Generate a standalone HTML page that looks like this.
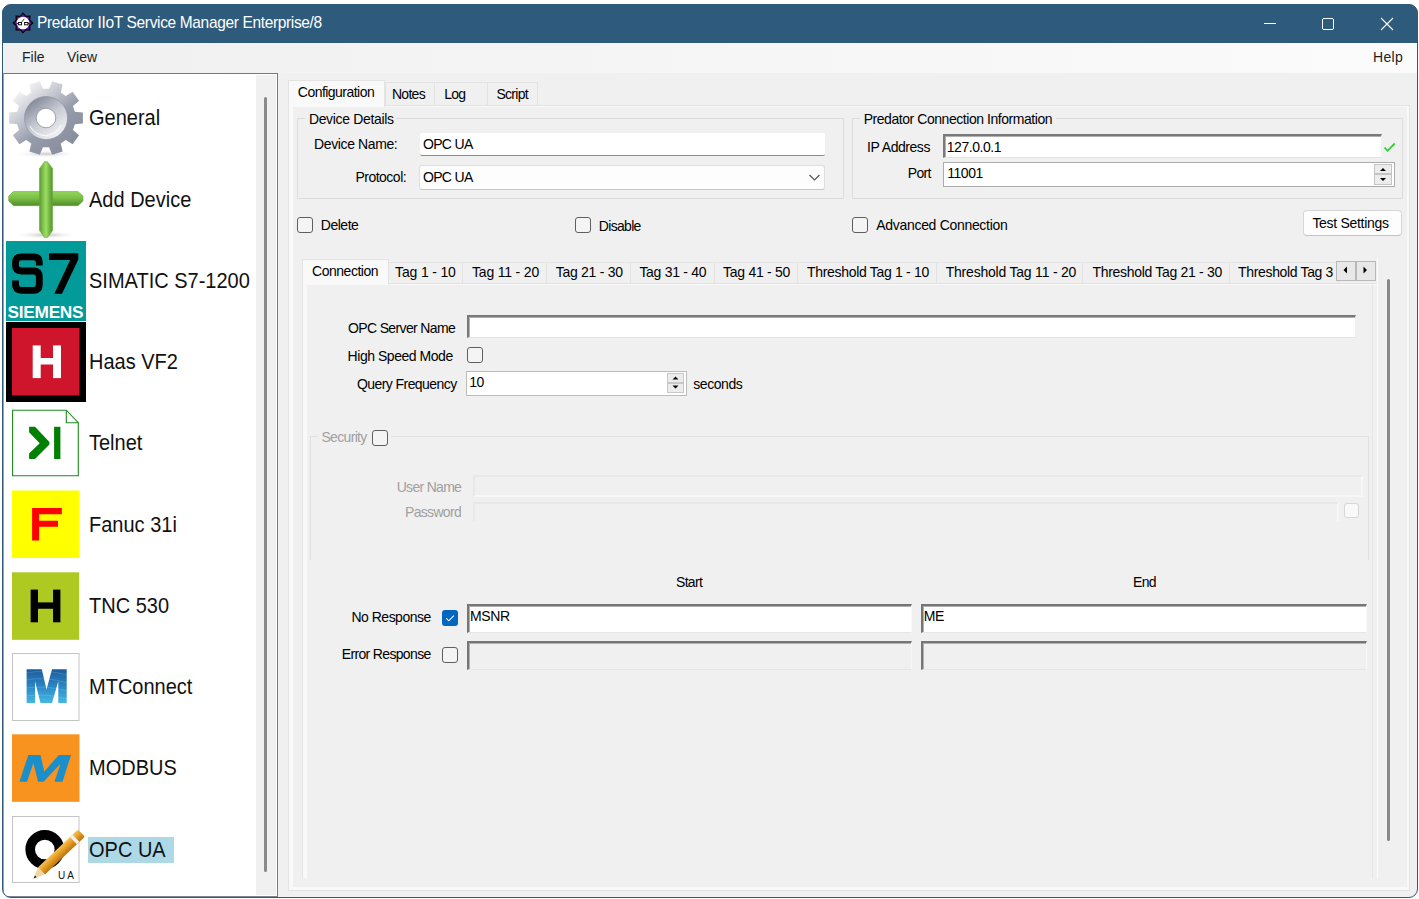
<!DOCTYPE html>
<html><head><meta charset="utf-8">
<style>
*{box-sizing:border-box;margin:0;padding:0}
html,body{width:1419px;height:899px;overflow:hidden;background:#fff;font-family:"Liberation Sans",sans-serif;color:#000;position:relative}
.a{position:absolute}
#win{position:absolute;left:2px;top:4px;width:1416px;height:894px;border-radius:9px;background:#f0f0f0}
#frame{position:absolute;left:2px;top:4px;width:1416px;height:894px;border-radius:9px;border:1px solid #2e5a7c;box-shadow:0 0 0 40px #fff;z-index:100;pointer-events:none}
#title{position:absolute;left:2px;top:4px;width:1416px;height:39px;background:#2e5a7c;border-radius:9px 9px 0 0}
#title .t{position:absolute;left:35px;top:11px;color:#fff;font-size:15.5px;line-height:16px;white-space:nowrap}
#menu{position:absolute;left:3px;top:43px;width:1414px;height:30px;background:linear-gradient(to right,#f0f0f0,#fbfbfb)}
#menu span{position:absolute;top:6px;font-size:14px;color:#1e1e1e}
#left{position:absolute;left:3px;top:73px;width:275px;height:824px;background:#fff;border-top:1px solid #6d7a87;border-right:1.5px solid #6d7a87;border-left:1px solid #9aa3ad;border-bottom:1px solid #7d8790}
.it{position:absolute;left:89px;font-size:20px;line-height:20px;color:#111;white-space:nowrap;transform:scaleY(1.08);transform-origin:0 16.93px}
.t{position:absolute;font-size:14px;line-height:14px;letter-spacing:-0.35px;white-space:nowrap;color:#000;transform:scaleY(1.08);transform-origin:0 11.85px}
.cb{position:absolute;width:16px;height:16px;border:1.2px solid #5f5f5f;border-radius:3px;background:#f4f4f4}
.cbc{position:absolute;width:16px;height:16px;border-radius:3px;background:#0067c0}
.itab{position:absolute;top:262px;height:22px;background:#f0f0f0;border:1px solid #e3e3e3;border-bottom:none}
.f3d{position:absolute;border-style:solid;border-width:2px 1px 1px 2px;border-color:#767676 #f7f7f7 #e6e6e6 #767676;box-shadow:inset 1px 1px 0 #b0b0b0}
</style></head><body>
<div id="win"></div>
<div id="title">
  <svg class="a" style="left:9.9px;top:7.9px;overflow:visible" width="22" height="22" viewBox="0 0 22 22">
    <polygon points="11.00,1.20 13.79,4.26 17.93,4.07 17.74,8.21 20.80,11.00 17.74,13.79 17.93,17.93 13.79,17.74 11.00,20.80 8.21,17.74 4.07,17.93 4.26,13.79 1.20,11.00 4.26,8.21 4.07,4.07 8.21,4.26" fill="#5b1590" stroke="#000" stroke-width="1.1" stroke-linejoin="miter"/>
    <circle cx="11" cy="11" r="6.3" fill="#fff"/>
    <rect x="6.4" y="10.5" width="3.1" height="2.3" fill="none" stroke="#111" stroke-width="1"/>
    <rect x="12.6" y="10.5" width="3.4" height="2.3" fill="none" stroke="#111" stroke-width="1"/>
    <line x1="4.6" y1="11.6" x2="6.4" y2="11.6" stroke="#111" stroke-width="0.9"/>
    <line x1="16" y1="11.6" x2="17.6" y2="11.6" stroke="#111" stroke-width="0.9"/>
    <line x1="9.8" y1="10" x2="12.3" y2="6.8" stroke="#222" stroke-width="0.9"/>
  </svg>
  <div class="t">Predator IIoT Service Manager Enterprise/8</div>
  <div class="a" style="left:1262px;top:19px;width:12px;height:1px;background:#fff"></div>
  <div class="a" style="left:1320px;top:14px;width:12px;height:12px;border:1.2px solid #fff;border-radius:2px"></div>
  <svg class="a" style="left:1378px;top:13px" width="14" height="14" viewBox="0 0 14 14"><path d="M1 1L13 13M13 1L1 13" stroke="#fff" stroke-width="1.1"/></svg>
</div>
<div id="menu">
  <span style="left:19px">File</span>
  <span style="left:64px">View</span>
  <span style="left:1370px;letter-spacing:0.3px">Help</span>
</div>
<div id="left"></div>
<!-- scrollbar of list -->
<div class="a" style="left:256px;top:75px;width:20px;height:820px;background:#f0f0f0"></div>
<div class="a" style="left:264px;top:97px;width:3px;height:775px;background:#8a8a8a;border-radius:1.5px"></div>

<!-- LEFT ITEMS -->
<!-- 0 gear -->
<svg class="a" style="left:6px;top:78px" width="80" height="80" viewBox="0 0 80 80">
  <defs>
    <linearGradient id="gg" x1="0.15" y1="0.1" x2="0.8" y2="0.9"><stop offset="0" stop-color="#f6f6f8"/><stop offset="0.33" stop-color="#c4c7d0"/><stop offset="0.6" stop-color="#979cab"/><stop offset="1" stop-color="#888e9e"/></linearGradient>
    <linearGradient id="gr" x1="0.2" y1="0.1" x2="0.8" y2="0.9"><stop offset="0" stop-color="#868c9c"/><stop offset="0.5" stop-color="#c8cbd3"/><stop offset="1" stop-color="#f2f2f5"/></linearGradient>
    <radialGradient id="gs"><stop offset="0" stop-color="#c8c8c8"/><stop offset="1" stop-color="#fff" stop-opacity="0"/></radialGradient>
  </defs>
  <ellipse cx="40" cy="76" rx="32" ry="4" fill="url(#gs)"/>
  <path id="gearp" fill="url(#gg)" d="M68.86 46.13 L76.89 45.51 L76.89 34.49 L68.86 33.87 L66.95 28.00 L73.09 22.78 L66.60 13.86 L59.74 18.08 L54.75 14.45 L56.64 6.62 L46.16 3.21 L43.08 10.66 L36.92 10.66 L33.84 3.21 L23.36 6.62 L25.25 14.45 L20.26 18.08 L13.40 13.86 L6.91 22.78 L13.05 28.00 L11.14 33.87 L3.11 34.49 L3.11 45.51 L11.14 46.13 L13.05 52.00 L6.91 57.22 L13.40 66.14 L20.26 61.92 L25.25 65.55 L23.36 73.38 L33.84 76.79 L36.92 69.34 L43.08 69.34 L46.16 76.79 L56.64 73.38 L54.75 65.55 L59.74 61.92 L66.60 66.14 L73.09 57.22 L66.95 52.00Z"/>
  <circle cx="40" cy="40" r="21.5" fill="url(#gr)" stroke="#8a90a0" stroke-width="0.6"/>
  <circle cx="40" cy="40" r="9.8" fill="#fff" stroke="#8a90a0" stroke-width="0.8"/>
  <path d="M24 48A17 17 0 0 0 55 47" fill="none" stroke="#fff" stroke-opacity="0.7" stroke-width="1.2"/>
</svg>
<div class="it" style="top:108.47px">General</div>
<!-- 1 plus -->
<svg class="a" style="left:6px;top:159px" width="80" height="80" viewBox="0 0 80 80">
  <defs>
    <linearGradient id="pv" x1="0" y1="0" x2="1" y2="0"><stop offset="0" stop-color="#5e9a34"/><stop offset="0.25" stop-color="#7cc04a"/><stop offset="0.5" stop-color="#9ee064"/><stop offset="0.75" stop-color="#74b444"/><stop offset="1" stop-color="#5a9430"/></linearGradient>
    <linearGradient id="ph" x1="0" y1="0" x2="0" y2="1"><stop offset="0" stop-color="#92d85a"/><stop offset="0.5" stop-color="#78bc46"/><stop offset="1" stop-color="#508a2a"/></linearGradient>
    <radialGradient id="ps"><stop offset="0" stop-color="#c0c0c0"/><stop offset="1" stop-color="#fff" stop-opacity="0"/></radialGradient>
  </defs>
  <ellipse cx="40" cy="76" rx="32" ry="4" fill="url(#ps)"/>
  <path d="M2.7 37L7.5 32.6H72L77 37V42L72 46.7H7.5L2.7 42Z" fill="url(#ph)" stroke="#6aa83c" stroke-width="0.6" stroke-linejoin="round"/>
  <path d="M33.5 9.5L38.5 2.7H41.5L46.6 9.5V71.5L41.5 78.4H38.5L33.5 71.5Z" fill="url(#pv)" stroke="#6aa83c" stroke-width="0.6" stroke-linejoin="round"/>
</svg>
<div class="it" style="top:189.72px">Add Device</div>
<!-- 2 S7 -->
<svg class="a" style="left:6px;top:240.5px" width="80" height="80" viewBox="0 0 80 80">
  <rect width="80" height="80" fill="#039a9a"/>
  <path d="M33.3 24.5V21.5Q33.3 15.8 27.5 15.8H15.3Q9.5 15.8 9.5 21.5V24.3Q9.5 30 15.3 30H27.5Q33.3 30 33.3 35.8V43.5Q33.3 49.4 27.5 49.4H15.3Q9.5 49.4 9.5 43.5V39.5" fill="none" stroke="#000" stroke-width="6.8"/>
  <path d="M43 12.3H72.3V18.6L56 52.8H48.3L64.2 19H43Z" fill="#000"/>
  <text x="1.6" y="77.3" font-family="Liberation Sans" font-weight="bold" font-size="17.3" letter-spacing="-0.3" fill="#fff">SIEMENS</text>
</svg>
<div class="it" style="top:270.97px">SIMATIC S7-1200</div>
<!-- 3 Haas -->
<svg class="a" style="left:6px;top:322px" width="80" height="80" viewBox="0 0 80 80">
  <rect x="0" y="0" width="80" height="80" fill="#000"/>
  <rect x="6" y="6" width="67.5" height="67.5" fill="#cf152b"/>
  <rect x="26.7" y="23.4" width="8" height="32.7" fill="#fff"/>
  <rect x="47" y="23.4" width="8" height="32.7" fill="#fff"/>
  <rect x="34" y="36" width="14" height="6.5" fill="#fff"/>
</svg>
<div class="it" style="top:352.22px">Haas VF2</div>
<!-- 4 Telnet -->
<svg class="a" style="left:6px;top:403px" width="80" height="80" viewBox="0 0 80 80">
  <path d="M6.6 7.2H60.3L72.3 19.7V72.8H6.6Z" fill="#fff" stroke="#1d8b1d" stroke-width="1.1"/>
  <path d="M60.3 7.2V19.7H72.3" fill="none" stroke="#1d8b1d" stroke-width="1.1"/>
  <path d="M23.1 23.8H29L43.4 39V41.6L29 56H23.1V50.5L33.7 40.3L23.1 29.3Z" fill="#008000"/>
  <rect x="48.1" y="23.8" width="6.3" height="32.2" fill="#008000"/>
</svg>
<div class="it" style="top:433.47px">Telnet</div>
<!-- 5 Fanuc -->
<svg class="a" style="left:6px;top:484px" width="80" height="80" viewBox="0 0 80 80">
  <rect x="6" y="6.5" width="67.5" height="67.5" fill="#ffff00"/>
  <path d="M26.1 24.1H55.8V30.3H33.1V36.7H52V42.8H33.1V56.5H26.1Z" fill="#ff0000"/>
</svg>
<div class="it" style="top:514.72px">Fanuc 31i</div>
<!-- 6 TNC -->
<svg class="a" style="left:6px;top:565.5px" width="80" height="80" viewBox="0 0 80 80">
  <rect x="6" y="6.3" width="67.2" height="67.5" fill="#aec922"/>
  <rect x="24.65" y="23.6" width="7.35" height="32.7" fill="#000"/>
  <rect x="47.05" y="23.6" width="7.35" height="32.7" fill="#000"/>
  <rect x="31.5" y="36.4" width="16" height="6.35" fill="#000"/>
</svg>
<div class="it" style="top:595.97px">TNC 530</div>
<!-- 7 MTConnect -->
<svg class="a" style="left:6px;top:646.8px" width="80" height="80" viewBox="0 0 80 80">
  <defs><linearGradient id="mg" x1="0" y1="0" x2="0" y2="1"><stop offset="0" stop-color="#1b5b9c"/><stop offset="0.5" stop-color="#2a86c4"/><stop offset="1" stop-color="#45b8e4"/></linearGradient></defs>
  <rect x="6.5" y="6.5" width="66.5" height="67" fill="#fff" stroke="#c4c4c4" stroke-width="1"/>
  <path d="M20.6 22.3H35.8L40.5 42.6L46 22.3H60.7V56.1H52.3V34.2L46 56.1H34.5L29 34.2V56.1H20.6Z" fill="url(#mg)"/>
  <path d="M20 26Q40 22 61 28M20 33Q40 29 61 36M20 41Q40 38 61 44M20 49Q40 46 61 52" fill="none" stroke="#fff" stroke-opacity="0.18" stroke-width="0.8"/>
</svg>
<div class="it" style="top:677.22px">MTConnect</div>
<!-- 8 MODBUS -->
<svg class="a" style="left:6px;top:728px" width="80" height="80" viewBox="0 0 80 80">
  <rect x="6" y="6.3" width="67.5" height="67.5" fill="#f7931e"/>
  <path d="M22.3 27.05H34.5L38.3 43.5L52.7 27.05H65L56.5 53.7H48.5L54.4 35.9L37.5 53.7H32L27.4 35.1L21 53.7H13.4Z" fill="#1b8fcc"/>
</svg>
<div class="it" style="top:758.47px">MODBUS</div>
<!-- 9 OPC UA -->
<svg class="a" style="left:6px;top:809.3px;overflow:visible" width="80" height="80" viewBox="0 0 80 80">
  <defs><linearGradient id="pen" x1="0" y1="0" x2="0" y2="1"><stop offset="0" stop-color="#f7c35a"/><stop offset="0.5" stop-color="#e39a1e"/><stop offset="1" stop-color="#b87412"/></linearGradient></defs>
  <rect x="6.5" y="7.5" width="66.5" height="66" fill="#fff" stroke="#c4c4c4" stroke-width="1"/>
  <circle cx="38.8" cy="40.5" r="14.6" fill="none" stroke="#000" stroke-width="9.6"/>
  <text x="52" y="70.3" font-family="Liberation Sans" font-size="10" letter-spacing="2" fill="#111">UA</text>
  <g transform="translate(27.5,69.5) rotate(-43.5)">
    <path d="M11 -5H64.5a1.5 1.5 0 0 1 1.5 1.5V3.5a1.5 1.5 0 0 1 -1.5 1.5H11Z" fill="url(#pen)"/>
    <path d="M0 0L11 -5V5Z" fill="#f3d6a6"/>
    <path d="M0 0L3.2 -1.25V1.25Z" fill="#1a1a2a"/>
    <rect x="55" y="-5" width="3.5" height="10" fill="#eeeeee"/>
  </g>
</svg>
<div class="a" style="left:88px;top:837px;width:86px;height:26px;background:#add8e6"></div>
<div class="it" style="top:839.72px">OPC UA</div>

<!-- ===== RIGHT PANE ===== -->
<!-- outer tabs -->
<div class="a" style="left:385px;top:82px;width:50px;height:24px;background:#f0f0f0;border:1px solid #e3e3e3;border-bottom:none"></div>
<div class="a" style="left:434px;top:82px;width:54px;height:24px;background:#f0f0f0;border:1px solid #e3e3e3;border-bottom:none"></div>
<div class="a" style="left:487px;top:82px;width:51px;height:24px;background:#f0f0f0;border:1px solid #e3e3e3;border-bottom:none"></div>
<!-- outer page frame -->
<div class="a" style="left:288px;top:105px;width:1122px;height:786px;background:#f9f9f9;border:1px solid #e3e3e3"></div>
<div class="a" style="left:293px;top:107px;width:1114px;height:780px;background:#f0f0f0"></div>
<!-- selected tab Configuration -->
<div class="a" style="left:288px;top:80px;width:97px;height:27px;background:#f9f9f9;border:1px solid #e3e3e3;border-bottom:none"></div>

<!-- Device Details group -->
<div class="a" style="left:297px;top:118px;width:547px;height:81px;border:1px solid #dcdcdc;border-radius:1px"></div>
<div class="a" style="left:305px;top:112px;width:91px;height:12px;background:#f0f0f0"></div>
<!-- device name textbox -->
<div class="a" style="left:420px;top:133px;width:405px;height:23px;background:#fff;border-bottom:1.5px solid #8a8a8a;border-radius:2px"></div>
<!-- combobox -->
<div class="a" style="left:419px;top:165px;width:406px;height:25px;background:#fdfdfd;border:1px solid #dedede;border-bottom-color:#c6c6c6;border-radius:3px"></div>
<svg class="a" style="left:808px;top:173px" width="13" height="9" viewBox="0 0 13 9"><path d="M1.5 2L6.5 7L11.5 2" fill="none" stroke="#555" stroke-width="1.2"/></svg>

<!-- Predator connection group -->
<div class="a" style="left:852px;top:118px;width:551px;height:81px;border:1px solid #dcdcdc;border-radius:1px"></div>
<div class="a" style="left:860px;top:112px;width:196px;height:12px;background:#f0f0f0"></div>
<!-- IP textbox fixed3d -->
<div class="a" style="left:943px;top:134px;width:439px;height:24px;background:#fff;border-style:solid;border-width:2px 1px 1px 2px;border-color:#7a7a7a #f0f0f0 #e3e3e3 #7a7a7a;box-shadow:inset 1px 1px 0 #b0b0b0"></div>
<svg class="a" style="left:1383px;top:141px" width="14" height="12" viewBox="0 0 14 12"><path d="M1.5 6.5L4.5 9.8L11.8 2.5" fill="none" stroke="#33cc33" stroke-width="1.8"/></svg>
<!-- Port numeric -->
<div class="a" style="left:943px;top:162px;width:452px;height:25px;background:#fff;border:1.5px solid #acacac"></div>
<div class="a" style="left:1374px;top:164px;width:18px;height:10px;background:#ececec;border:1px solid #c4c4c4"></div>
<div class="a" style="left:1374px;top:174px;width:18px;height:11px;background:#ececec;border:1px solid #c4c4c4"></div>
<svg class="a" style="left:1379px;top:166px" width="8" height="18" viewBox="0 0 8 18"><path d="M1 5H7L4 2Z M1 12H7L4 15Z" fill="#000"/></svg>

<!-- checkboxes -->
<div class="cb" style="left:297px;top:217px"></div>
<div class="cb" style="left:574.5px;top:217px"></div>
<div class="cb" style="left:852px;top:217px"></div>
<!-- Test Settings button -->
<div class="a" style="left:1302.5px;top:209.5px;width:99px;height:26px;background:#fdfdfd;border:1px solid #d6d6d6;border-bottom-color:#c2c2c2;border-radius:4px"></div>

<!-- inner tabs -->
<div class="a" style="left:388px;top:262px;width:1349px;height:22px;"></div>
<div class="itab" style="left:388px;width:75px"></div>
<div class="itab" style="left:462px;width:85px"></div>
<div class="itab" style="left:546px;width:85px"></div>
<div class="itab" style="left:630px;width:85px"></div>
<div class="itab" style="left:714px;width:84px"></div>
<div class="itab" style="left:797px;width:140px"></div>
<div class="itab" style="left:936px;width:147px"></div>
<div class="itab" style="left:1082px;width:148px"></div>
<div class="itab" style="left:1229px;width:110px"></div>
<!-- inner page frame -->
<div class="a" style="left:302px;top:283px;width:1076px;height:595px;background:#f9f9f9;border:1px solid #e3e3e3;border-bottom:none;border-right-color:#fbfbfb"></div>
<div class="a" style="left:307px;top:285px;width:1070px;height:593px;background:#f0f0f0"></div>
<div class="a" style="left:1372px;top:285px;width:1px;height:593px;background:#e6e6e6"></div>
<div class="a" style="left:302px;top:258.5px;width:87px;height:26px;background:#f9f9f9;border:1px solid #e3e3e3;border-bottom:none"></div>
<!-- scroll buttons -->
<div class="a" style="left:1336px;top:260.5px;width:40px;height:20px;background:#e8e8e8;border:1.5px solid #b8b8b8"></div>
<div class="a" style="left:1355px;top:260.5px;width:2px;height:20px;background:#b8b8b8"></div>
<svg class="a" style="left:1336px;top:260px" width="40" height="20" viewBox="0 0 40 20"><path d="M11 6.5V13.5L7.5 10Z M27.5 6.5V13.5L31 10Z" fill="#000"/></svg>
<div class="a" style="left:1377px;top:258px;width:1px;height:26px;background:#fbfbfb"></div>
<!-- form scroll line -->
<div class="a" style="left:1387px;top:279px;width:3px;height:562px;background:#888;border-radius:1.5px"></div>

<!-- OPC server box -->
<div class="a" style="left:467px;top:314.5px;width:889px;height:23.5px;background:#fff;border-style:solid;border-width:2px 1px 1px 2px;border-color:#7a7a7a #f0f0f0 #e3e3e3 #7a7a7a;box-shadow:inset 1px 1px 0 #b0b0b0"></div>
<div class="cb" style="left:467px;top:347px"></div>
<!-- query numeric -->
<div class="a" style="left:466px;top:370.5px;width:221px;height:25px;background:#fff;border:1.5px solid #bcbcbc"></div>
<div class="a" style="left:667px;top:373px;width:17px;height:10px;background:#ececec;border:1px solid #c8c8c8"></div>
<div class="a" style="left:667px;top:383px;width:17px;height:10px;background:#ececec;border:1px solid #c8c8c8"></div>
<svg class="a" style="left:671.5px;top:375px" width="8" height="16" viewBox="0 0 8 16"><path d="M0.5 4.5H6.5L3.5 1.5Z M0.5 10.5H6.5L3.5 13.5Z" fill="#000"/></svg>

<!-- Security group -->
<div class="a" style="left:310px;top:436px;width:1059px;height:124px;border:1px solid #e0e0e0;border-bottom:none"></div>
<div class="a" style="left:318px;top:428px;width:73px;height:18px;background:#f0f0f0"></div>
<div class="cb" style="left:372px;top:429.5px"></div>
<div class="a" style="left:473px;top:474.5px;width:890px;height:22px;border:2px solid #f7f7f7;border-top-color:#e8e8e8;border-left-color:#e8e8e8"></div>
<div class="a" style="left:473px;top:502px;width:866px;height:19px;border:2px solid #f7f7f7;border-bottom:none;border-top-color:#e8e8e8;border-left-color:#e8e8e8"></div>
<div class="a" style="left:1343.5px;top:503px;width:15.5px;height:15px;background:#f9f9f9;border:1px solid #d6d6d6;border-radius:3px"></div>

<!-- response boxes -->
<div class="cbc" style="left:442px;top:609.5px"><svg width="16" height="16" viewBox="0 0 16 16" style="position:absolute;left:0;top:0"><path d="M4.2 8.2L6.8 10.8L11.8 5.6" fill="none" stroke="#fff" stroke-width="1.1"/></svg></div>
<div class="cb" style="left:442px;top:647px"></div>
<div class="f3d" style="left:467px;top:603.5px;width:445px;height:29px;background:#fff"></div>
<div class="f3d" style="left:921px;top:603.5px;width:446px;height:29px;background:#fff"></div>
<div class="f3d" style="left:467px;top:641px;width:445px;height:29px;background:#f0f0f0"></div>
<div class="f3d" style="left:921px;top:641px;width:446px;height:29px;background:#f0f0f0"></div>

<!-- TEXTS -->
<div class="t" style="left:297.8px;top:84.7px;letter-spacing:-0.53px">Configuration</div>
<div class="t" style="left:391.9px;top:86.7px;letter-spacing:-0.70px">Notes</div>
<div class="t" style="left:444.2px;top:86.7px;letter-spacing:-0.70px">Log</div>
<div class="t" style="left:496.4px;top:86.7px;letter-spacing:-0.70px">Script</div>
<div class="t" style="left:308.9px;top:112.0px;letter-spacing:-0.34px">Device Details</div>
<div class="t" style="left:314.1px;top:137.0px;letter-spacing:-0.39px">Device Name:</div>
<div class="t" style="left:422.9px;top:137.0px;letter-spacing:-0.64px">OPC UA</div>
<div class="t" style="left:355.4px;top:170.0px;letter-spacing:-0.50px">Protocol:</div>
<div class="t" style="left:422.9px;top:170.0px;letter-spacing:-0.64px">OPC UA</div>
<div class="t" style="left:863.7px;top:112.0px;letter-spacing:-0.45px">Predator Connection Information</div>
<div class="t" style="left:867.1px;top:139.5px;letter-spacing:-0.46px">IP Address</div>
<div class="t" style="left:946.7px;top:139.5px;letter-spacing:-0.44px">127.0.0.1</div>
<div class="t" style="left:907.8px;top:165.7px;letter-spacing:-0.70px">Port</div>
<div class="t" style="left:947.2px;top:165.7px;letter-spacing:-0.45px">11001</div>
<div class="t" style="left:320.8px;top:218.4px;letter-spacing:-0.48px">Delete</div>
<div class="t" style="left:598.8px;top:218.7px;letter-spacing:-0.68px">Disable</div>
<div class="t" style="left:876.3px;top:217.8px;letter-spacing:-0.31px">Advanced Connection</div>
<div class="t" style="left:1312.4px;top:216.0px;letter-spacing:-0.30px">Test Settings</div>
<div class="t" style="left:312.0px;top:263.7px;letter-spacing:-0.47px">Connection</div>
<div class="t" style="left:395.1px;top:265.4px;letter-spacing:-0.17px">Tag 1 - 10</div>
<div class="t" style="left:472.0px;top:265.4px;letter-spacing:-0.18px">Tag 11 - 20</div>
<div class="t" style="left:555.7px;top:265.4px;letter-spacing:-0.28px">Tag 21 - 30</div>
<div class="t" style="left:639.4px;top:265.4px;letter-spacing:-0.28px">Tag 31 - 40</div>
<div class="t" style="left:723.1px;top:265.4px;letter-spacing:-0.28px">Tag 41 - 50</div>
<div class="t" style="left:806.9px;top:265.4px;letter-spacing:-0.30px">Threshold Tag 1 - 10</div>
<div class="t" style="left:945.7px;top:265.4px;letter-spacing:-0.21px">Threshold Tag 11 - 20</div>
<div class="t" style="left:1092.4px;top:265.4px;letter-spacing:-0.30px">Threshold Tag 21 - 30</div>
<div class="t" style="left:1238.1px;top:265.4px;letter-spacing:-0.35px">Threshold Tag 3</div>
<div class="t" style="left:348.0px;top:320.8px;letter-spacing:-0.64px">OPC Server Name</div>
<div class="t" style="left:347.6px;top:349.4px;letter-spacing:-0.46px">High Speed Mode</div>
<div class="t" style="left:356.9px;top:376.9px;letter-spacing:-0.56px">Query Frequency</div>
<div class="t" style="left:469.2px;top:374.7px;letter-spacing:-0.35px">10</div>
<div class="t" style="left:693.3px;top:377.2px;letter-spacing:-0.45px">seconds</div>
<div class="t" style="left:321.4px;top:429.8px;letter-spacing:-0.66px;color:#a0a0a0">Security</div>
<div class="t" style="left:396.7px;top:479.6px;letter-spacing:-0.70px;color:#a0a0a0">User Name</div>
<div class="t" style="left:405.1px;top:504.6px;letter-spacing:-0.70px;color:#a0a0a0">Password</div>
<div class="t" style="left:676.0px;top:574.7px;letter-spacing:-0.70px">Start</div>
<div class="t" style="left:1133.1px;top:574.7px;letter-spacing:-0.70px">End</div>
<div class="t" style="left:351.5px;top:609.6px;letter-spacing:-0.51px">No Response</div>
<div class="t" style="left:469.9px;top:608.6px;letter-spacing:-0.35px">MSNR</div>
<div class="t" style="left:923.8px;top:608.6px;letter-spacing:-0.35px">ME</div>
<div class="t" style="left:341.7px;top:647.4px;letter-spacing:-0.65px">Error Response</div>
<div id="frame"></div>
</body></html>
